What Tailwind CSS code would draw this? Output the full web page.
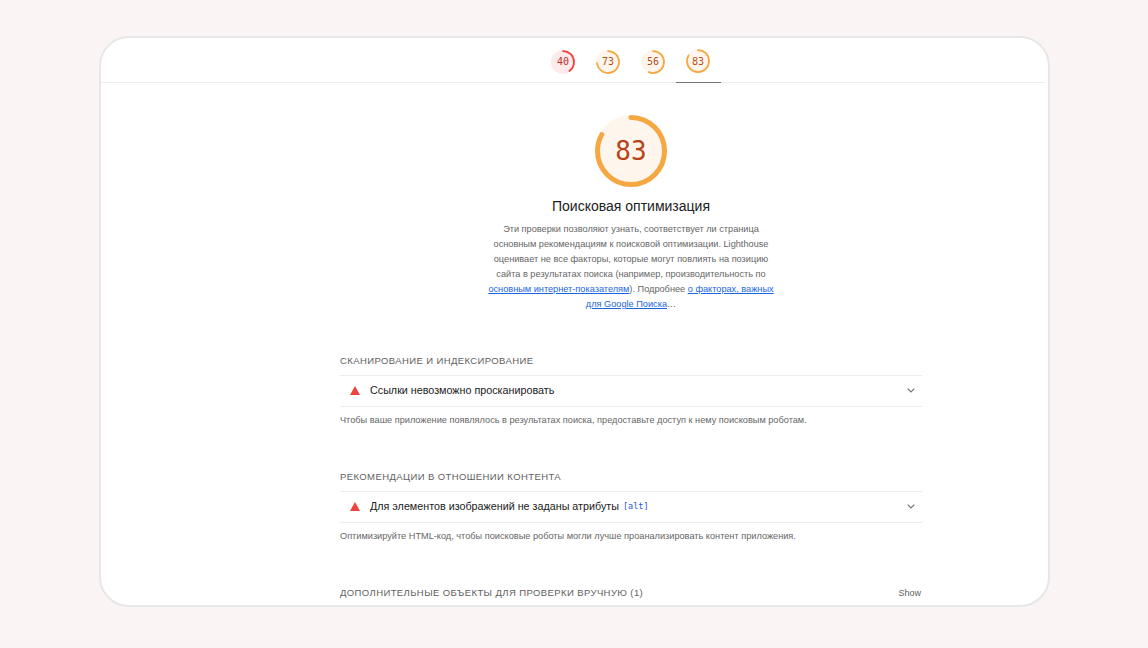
<!DOCTYPE html>
<html lang="ru">
<head>
  <meta charset="UTF-8">
  <title>Lighthouse</title>
  <script src="https://cdn.jsdelivr.net/npm/@tailwindcss/browser@4"></script>
</head>
<body class="bg-[#faf5f4] h-[648px] w-[1148px] overflow-hidden font-['Liberation_Sans',sans-serif]">
  <div class="pt-[36px] pl-[99px]">
    <div class="w-[951px] h-[571px] bg-white border-2 border-[#e7e7e7] rounded-[30px] overflow-hidden">

      <!-- score tabs -->
      <div class="h-[45px] mr-[3px] border-b border-[#ebebeb] flex justify-center pl-[115px]">
        <div class="w-[45px] h-[45px] pt-[2px] flex items-center justify-center">
          <div class="relative w-[24px] h-[24px] flex items-center justify-center">
            <svg class="absolute inset-0" viewBox="0 0 24 24" fill="none">
              <circle cx="12" cy="12" r="12" fill="#fdeaea"/>
              <circle cx="12" cy="12" r="11" stroke="#f0423c" stroke-width="1.75" stroke-linecap="round" stroke-dasharray="27.6 69.1" transform="rotate(-90 12 12)"/>
            </svg>
            <span class="relative text-[10px] text-[#c4312b] font-['DejaVu_Sans_Mono',monospace]">40</span>
          </div>
        </div>
        <div class="w-[45px] h-[45px] pt-[2px] flex items-center justify-center">
          <div class="relative w-[24px] h-[24px] flex items-center justify-center">
            <svg class="absolute inset-0" viewBox="0 0 24 24" fill="none">
              <circle cx="12" cy="12" r="12" fill="#fef6ec"/>
              <circle cx="12" cy="12" r="11" stroke="#f5a742" stroke-width="1.75" stroke-linecap="round" stroke-dasharray="50.4 69.1" transform="rotate(-90 12 12)"/>
            </svg>
            <span class="relative text-[10px] text-[#b8501f] font-['DejaVu_Sans_Mono',monospace]">73</span>
          </div>
        </div>
        <div class="w-[45px] h-[45px] pt-[2px] flex items-center justify-center">
          <div class="relative w-[24px] h-[24px] flex items-center justify-center">
            <svg class="absolute inset-0" viewBox="0 0 24 24" fill="none">
              <circle cx="12" cy="12" r="12" fill="#fef6ec"/>
              <circle cx="12" cy="12" r="11" stroke="#f5a742" stroke-width="1.75" stroke-linecap="round" stroke-dasharray="38.7 69.1" transform="rotate(-90 12 12)"/>
            </svg>
            <span class="relative text-[10px] text-[#b8501f] font-['DejaVu_Sans_Mono',monospace]">56</span>
          </div>
        </div>
        <div class="w-[45px] h-[45px] pt-[2px] flex items-center justify-center border-b border-[#757575]">
          <div class="relative w-[24px] h-[24px] flex items-center justify-center">
            <svg class="absolute inset-0" viewBox="0 0 24 24" fill="none">
              <circle cx="12" cy="12" r="12" fill="#fef6ec"/>
              <circle cx="12" cy="12" r="11" stroke="#f5a742" stroke-width="1.75" stroke-linecap="round" stroke-dasharray="57.4 69.1" transform="rotate(-90 12 12)"/>
            </svg>
            <span class="relative text-[10px] text-[#b8501f] font-['DejaVu_Sans_Mono',monospace]">83</span>
          </div>
        </div>
      </div>

      <!-- big gauge and description -->
      <div class="flex flex-col items-center pt-[32px] pl-[115px] pr-[2px]">
        <div class="relative w-[72px] h-[72px] flex items-center justify-center">
          <svg class="absolute inset-0" viewBox="0 0 72 72" fill="none">
            <circle cx="36" cy="36" r="36" fill="#fef6ec"/>
            <circle cx="36" cy="36" r="33.5" stroke="#f5a742" stroke-width="5" stroke-linecap="round" stroke-dasharray="174.7 210.5" transform="rotate(-90 36 36)"/>
          </svg>
          <span class="relative text-[26px] text-[#b8421a] font-['DejaVu_Sans_Mono',monospace]">83</span>
        </div>
        <h1 class="mt-[9px] text-[14px] leading-[20px] text-[#212121]">Поисковая оптимизация</h1>
        <p class="mt-[6px] w-[290px] text-center text-[9.2px] leading-[15px] text-[#666666]">
          Эти проверки позволяют узнать, соответствует ли страница основным рекомендациям к поисковой оптимизации. Lighthouse оценивает не все факторы, которые могут повлиять на позицию сайта в результатах поиска (например, производительность по <a class="text-[#1a66e0] underline">основным интернет-показателям</a>). Подробнее <a class="text-[#1a66e0] underline">о факторах, важных для Google Поиска</a>…
        </p>
      </div>

      <!-- audit groups -->
      <div class="w-[582px] ml-[239px] mt-[42px]">
        <h2 class="text-[9.5px] leading-[14px] tracking-[0.4px] text-[#616161]">СКАНИРОВАНИЕ И ИНДЕКСИРОВАНИЕ</h2>
        <div class="mt-[7px] h-[32px] pb-[1px] border-y border-[#ededed] flex items-center pl-[10px] pr-[7px]">
          <svg class="w-[10px] h-[9px] mr-[10px]" viewBox="0 0 10 9"><path d="M5 0L10 9H0Z" fill="#f0423c"/></svg>
          <span class="text-[10.75px] text-[#212121]">Ссылки невозможно просканировать</span>
          <svg class="ml-auto w-[8px] h-[5px]" viewBox="0 0 8 5" fill="none"><path d="M.7.7L4 4 7.3.7" stroke="#757575" stroke-width="1.2"/></svg>
        </div>
        <p class="mt-[7px] text-[9.2px] leading-[13px] text-[#666666]">Чтобы ваше приложение появлялось в результатах поиска, предоставьте доступ к нему поисковым роботам.</p>

        <h2 class="mt-[43px] text-[9.5px] leading-[14px] tracking-[0.4px] text-[#616161]">РЕКОМЕНДАЦИИ В ОТНОШЕНИИ КОНТЕНТА</h2>
        <div class="mt-[7px] h-[32px] pb-[1px] border-y border-[#ededed] flex items-center pl-[10px] pr-[7px]">
          <svg class="w-[10px] h-[9px] mr-[10px]" viewBox="0 0 10 9"><path d="M5 0L10 9H0Z" fill="#f0423c"/></svg>
          <span class="text-[10.75px] text-[#212121]">Для элементов изображений не заданы атрибуты</span>
          <span class="ml-[4px] text-[8.5px] text-[#1a56db] font-['DejaVu_Sans_Mono',monospace]">[alt]</span>
          <svg class="ml-auto w-[8px] h-[5px]" viewBox="0 0 8 5" fill="none"><path d="M.7.7L4 4 7.3.7" stroke="#757575" stroke-width="1.2"/></svg>
        </div>
        <p class="mt-[7px] text-[9.2px] leading-[13px] text-[#666666]">Оптимизируйте HTML-код, чтобы поисковые роботы могли лучше проанализировать контент приложения.</p>

        <div class="mt-[43px] flex items-center justify-between">
          <h2 class="text-[9.5px] leading-[14px] tracking-[0.4px] text-[#616161]">ДОПОЛНИТЕЛЬНЫЕ ОБЪЕКТЫ ДЛЯ ПРОВЕРКИ ВРУЧНУЮ (1)</h2>
          <span class="text-[9px] pt-[1px] pr-[1px] text-[#616161]">Show</span>
        </div>
      </div>
    </div>
  </div>
</body>
</html>
